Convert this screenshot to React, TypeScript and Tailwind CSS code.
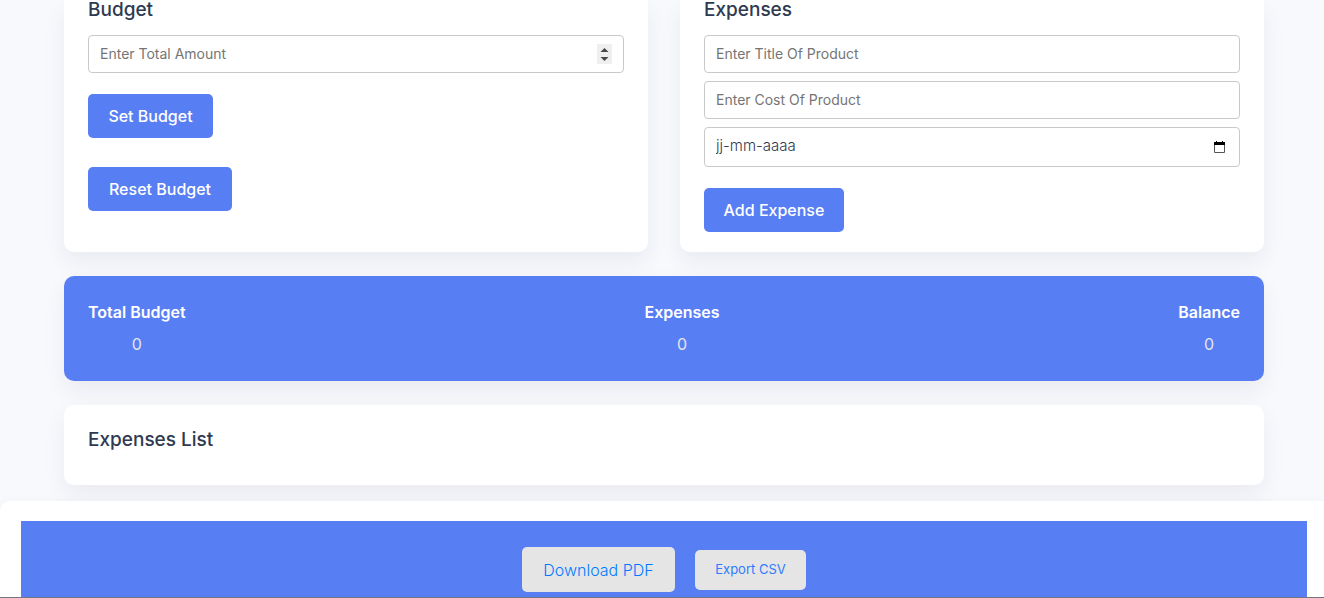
import React from "react";

const fieldClass =
  "block h-[38px] w-full rounded border border-[#c9c9c9] bg-white px-[11px] pb-0.5 text-sm text-[#2f3a50] placeholder:text-[#757575] outline-none focus:border-[#587ef4]";
const buttonClass =
  "h-11 rounded-[5px] bg-[#587ef4] px-4 text-base font-medium text-white";
const headingClass = "text-[19px]/5 font-medium text-[#2f3a50]";
const shadowClass = "shadow-[0_10px_24px_rgba(17,7,53,0.06)]";

function CalendarIcon() {
  return (
    <svg width="11" height="12" viewBox="0 0 11 12" aria-hidden="true">
      <path d="M.5 1.5h10v10H.5z" fill="none" stroke="#555" />
      <path d="M0 1h2V0h1v1h5V0h1v1h2v3H0z" fill="#000" />
    </svg>
  );
}

function BudgetCard() {
  return (
    <section className={`rounded-b-[10px] bg-white px-6 pb-5 ${shadowClass}`}>
      <h2 className={`mb-[15px] ${headingClass}`}>Budget</h2>
      <form className="flex flex-col items-start" onSubmit={(e) => e.preventDefault()}>
        <div className="relative w-full">
          <input
            type="number"
            aria-label="Total amount"
            placeholder="Enter Total Amount"
            className={`${fieldClass} [appearance:textfield] [&::-webkit-inner-spin-button]:appearance-none`}
          />
          <span className="absolute inset-y-0 right-3 flex items-center">
            <svg width="15" height="20" viewBox="0 0 15 20" aria-hidden="true">
              <path d="M0 0h15v20H0z" fill="#efefef" />
              <path d="M3.5 8 7.5 4l4 4zM3.5 13h8l-4 4z" fill="#484848" />
            </svg>
          </span>
        </div>
        <button type="submit" className={`${buttonClass} mt-[21px] min-w-[125px]`}>
          Set Budget
        </button>
        <button type="reset" className={`${buttonClass} mt-[29px] min-w-36`}>
          Reset Budget
        </button>
      </form>
    </section>
  );
}

function ExpenseCard() {
  return (
    <section className={`rounded-b-[10px] bg-white px-6 pb-5 ${shadowClass}`}>
      <h2 className={`mb-[15px] ${headingClass}`}>Expenses</h2>
      <form className="flex flex-col items-start gap-2" onSubmit={(e) => e.preventDefault()}>
        <input
          type="text"
          aria-label="Title of product"
          placeholder="Enter Title Of Product"
          className={fieldClass}
        />
        <input
          type="text"
          inputMode="decimal"
          aria-label="Cost of product"
          placeholder="Enter Cost Of Product"
          className={fieldClass}
        />
        <div className="flex h-10 w-full items-center rounded border border-[#c9c9c9] bg-white pr-3.5 pl-[11px]">
          <input
            type="text"
            aria-label="Date"
            placeholder="jj-mm-aaaa"
            className="min-w-0 flex-1 bg-transparent pb-0.5 text-[15px] font-light text-[#2f3a50] outline-none placeholder:text-[#2f3a50]"
          />
          <button type="button" aria-label="Open calendar">
            <CalendarIcon />
          </button>
        </div>
        <button type="submit" className={`${buttonClass} mt-[13px] min-w-[140px]`}>
          Add Expense
        </button>
      </form>
    </section>
  );
}

const totals = [
  { label: "Total Budget", value: 0 },
  { label: "Expenses", value: 0 },
  { label: "Balance", value: 0 },
];

export default function App() {
  return (
    <div className="flex min-h-screen flex-col overflow-hidden bg-[#f7f9fd] font-['Inter',sans-serif]">
      <main className="flex flex-col gap-6 pr-[60px] pb-4 pl-16">
        <div className="grid grid-cols-2 gap-8">
          <BudgetCard />
          <ExpenseCard />
        </div>
        <dl
          className={`flex justify-between rounded-[10px] bg-[#587ef4] px-6 pt-5 pb-[21px] text-center text-base/8 text-white ${shadowClass}`}
        >
          {totals.map((total) => (
            <div key={total.label}>
              <dt className="font-semibold">{total.label}</dt>
              <dd className="text-[#e5e5e5]">{total.value}</dd>
            </div>
          ))}
        </dl>
        <section className={`rounded-[10px] bg-white px-6 pt-[25px] pb-[35px] ${shadowClass}`}>
          <h2 className={headingClass}>Expenses List</h2>
        </section>
      </main>
      <footer className="relative flex flex-1 flex-col rounded-tl-[10px] border-b border-[#737680] bg-white pt-5 pr-[17px] pl-[21px] shadow-[0_0_10px_rgba(17,7,53,0.03)]">
        <div className="flex flex-1 items-center justify-center gap-5 bg-[#587ef4] pt-[26px] pb-[5px]">
          <button
            type="button"
            className="h-[45px] min-w-[153px] rounded-[5px] bg-[#e5e5e5] px-4 text-base font-light text-[#007bff]"
          >
            Download PDF
          </button>
          <button
            type="button"
            className="h-10 min-w-[111px] rounded-[5px] bg-[#e5e5e5] px-4 text-[13px] text-[#2f7cff]"
          >
            Export CSV
          </button>
        </div>
      </footer>
    </div>
  );
}
